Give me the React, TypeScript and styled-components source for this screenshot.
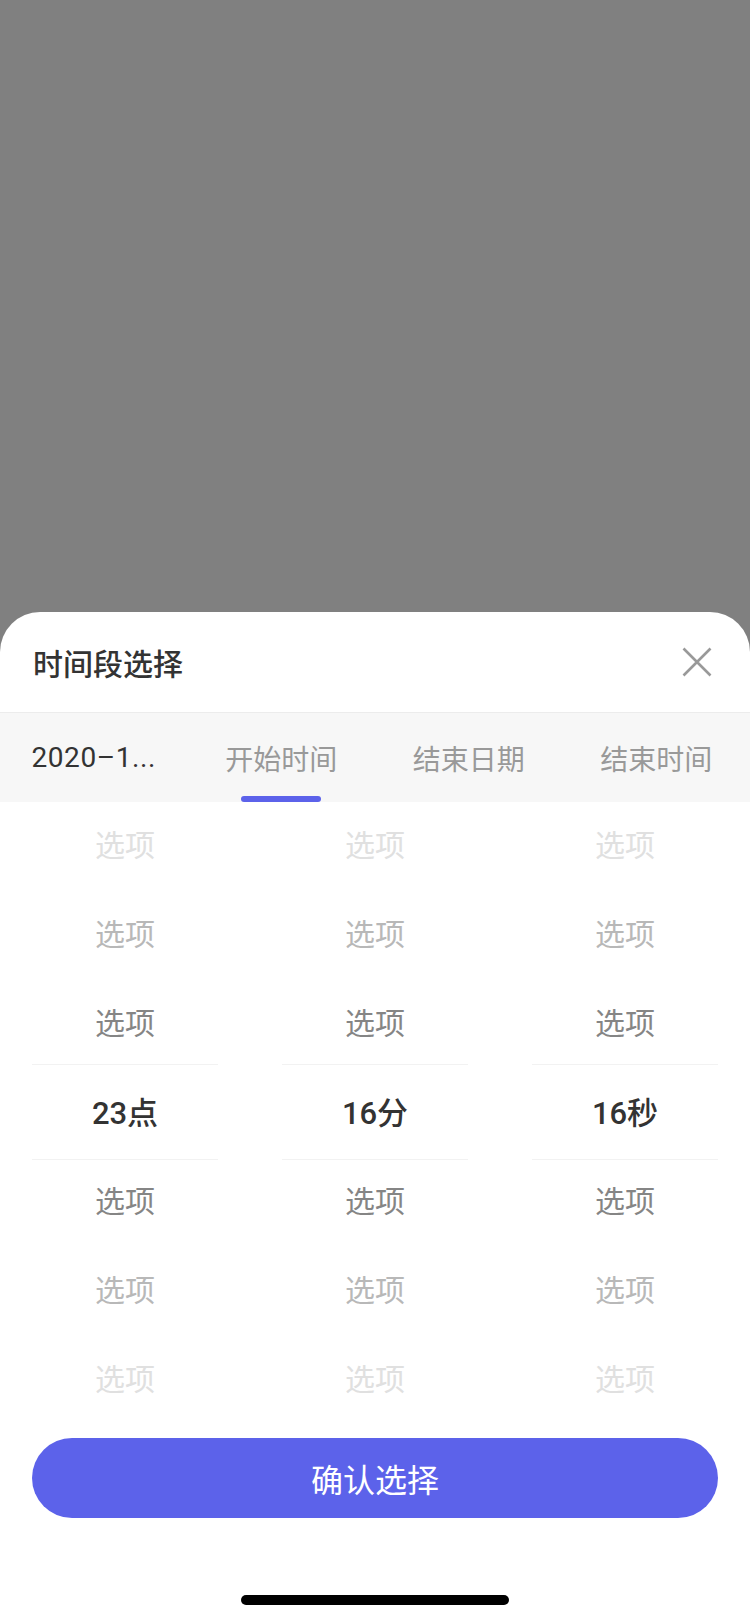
import React from "react";
import styled, { createGlobalStyle } from "styled-components";

const GlobalStyle = createGlobalStyle`
  html, body {
    margin: 0;
    padding: 0;
  }
  body {
    font-family: "Roboto", "Noto Sans CJK SC", sans-serif;
    -webkit-font-smoothing: antialiased;
  }
`;

const Page = styled.div`
  width: 750px;
  height: 1624px;
  background: #808080;
  display: flex;
  flex-direction: column;
  justify-content: flex-end;
`;

const Sheet = styled.div`
  background: #fff;
  border-radius: 40px 40px 0 0;
  display: flex;
  flex-direction: column;
`;

const Header = styled.div`
  height: 100px;
  padding: 0 38px 0 33px;
  display: flex;
  align-items: center;
  justify-content: space-between;
  border-bottom: 1px solid #ececec;
`;

const Title = styled.div`
  font-size: 30px;
  font-weight: 500;
  color: #333;
`;

const CloseButton = styled.button`
  width: 30px;
  height: 30px;
  padding: 0;
  border: none;
  background: none;
  display: flex;
  align-items: center;
  justify-content: center;
`;

const Tabs = styled.div`
  height: 89px;
  background: #f7f7f7;
  display: grid;
  grid-template-columns: repeat(4, 1fr);
`;

const Tab = styled.div<{ $active?: boolean; $filled?: boolean }>`
  position: relative;
  display: flex;
  align-items: center;
  justify-content: center;
  font-size: 28px;
  color: ${(p) => (p.$filled ? "#333" : "#999")};
  letter-spacing: ${(p) => (p.$filled ? "0.6px" : "0")};

  &::after {
    content: "";
    display: ${(p) => (p.$active ? "block" : "none")};
    position: absolute;
    bottom: 0;
    left: 50%;
    width: 80px;
    height: 6px;
    margin-left: -40px;
    border-radius: 3px;
    background: #5c62ea;
  }
`;

const Picker = styled.div`
  padding: 0 32px;
  display: grid;
  grid-template-columns: repeat(3, 1fr);
  column-gap: 64px;
`;

const Column = styled.div`
  position: relative;
  display: flex;
  flex-direction: column;
`;

const Band = styled.div`
  position: absolute;
  left: 0;
  right: 0;
  top: 262px;
  height: 94px;
  border-top: 1px solid #f2f2f2;
  border-bottom: 1px solid #f2f2f2;
  pointer-events: none;
`;

const Option = styled.div<{ $tone: number }>`
  height: 89px;
  box-sizing: border-box;
  padding-bottom: 7px;
  display: flex;
  align-items: center;
  justify-content: center;
  font-size: ${(p) => (p.$tone === 0 ? 31 : 30)}px;
  font-weight: ${(p) => (p.$tone === 0 ? 500 : 400)};
  color: ${(p) => ["#333", "#858585", "#b8b8b8", "#e0e0e0"][p.$tone]};
`;

const Footer = styled.div`
  padding: 13px 32px 0;
`;

const Confirm = styled.button`
  width: 100%;
  height: 80px;
  border: none;
  border-radius: 40px;
  background: #5c62ea;
  color: #fff;
  font-family: inherit;
  font-size: 32px;
`;

const HomeArea = styled.div`
  height: 106px;
  display: flex;
  align-items: flex-end;
  justify-content: center;
  padding-bottom: 19px;
  box-sizing: border-box;
`;

const HomeBar = styled.div`
  width: 268px;
  height: 10px;
  border-radius: 5px;
  background: #000;
`;

const columns = ["23点", "16分", "16秒"];
const tones = [3, 2, 1, 0, 1, 2, 3];

export default function App() {
  return (
    <>
      <GlobalStyle />
      <Page>
        <Sheet>
          <Header>
            <Title>时间段选择</Title>
            <CloseButton aria-label="关闭">
              <svg width="30" height="30" viewBox="0 0 30 30">
                <path
                  d="M1.5 1.5 L28.5 28.5 M28.5 1.5 L1.5 28.5"
                  stroke="#999"
                  strokeWidth="2.6"
                  fill="none"
                />
              </svg>
            </CloseButton>
          </Header>
          <Tabs>
            <Tab $filled>2020–1...</Tab>
            <Tab $active>开始时间</Tab>
            <Tab>结束日期</Tab>
            <Tab>结束时间</Tab>
          </Tabs>
          <Picker>
            {columns.map((value) => (
              <Column key={value}>
                <Band />
                {tones.map((tone, i) => (
                  <Option key={i} $tone={tone}>
                    {tone === 0 ? value : "选项"}
                  </Option>
                ))}
              </Column>
            ))}
          </Picker>
          <Footer>
            <Confirm>确认选择</Confirm>
          </Footer>
          <HomeArea>
            <HomeBar />
          </HomeArea>
        </Sheet>
      </Page>
    </>
  );
}
